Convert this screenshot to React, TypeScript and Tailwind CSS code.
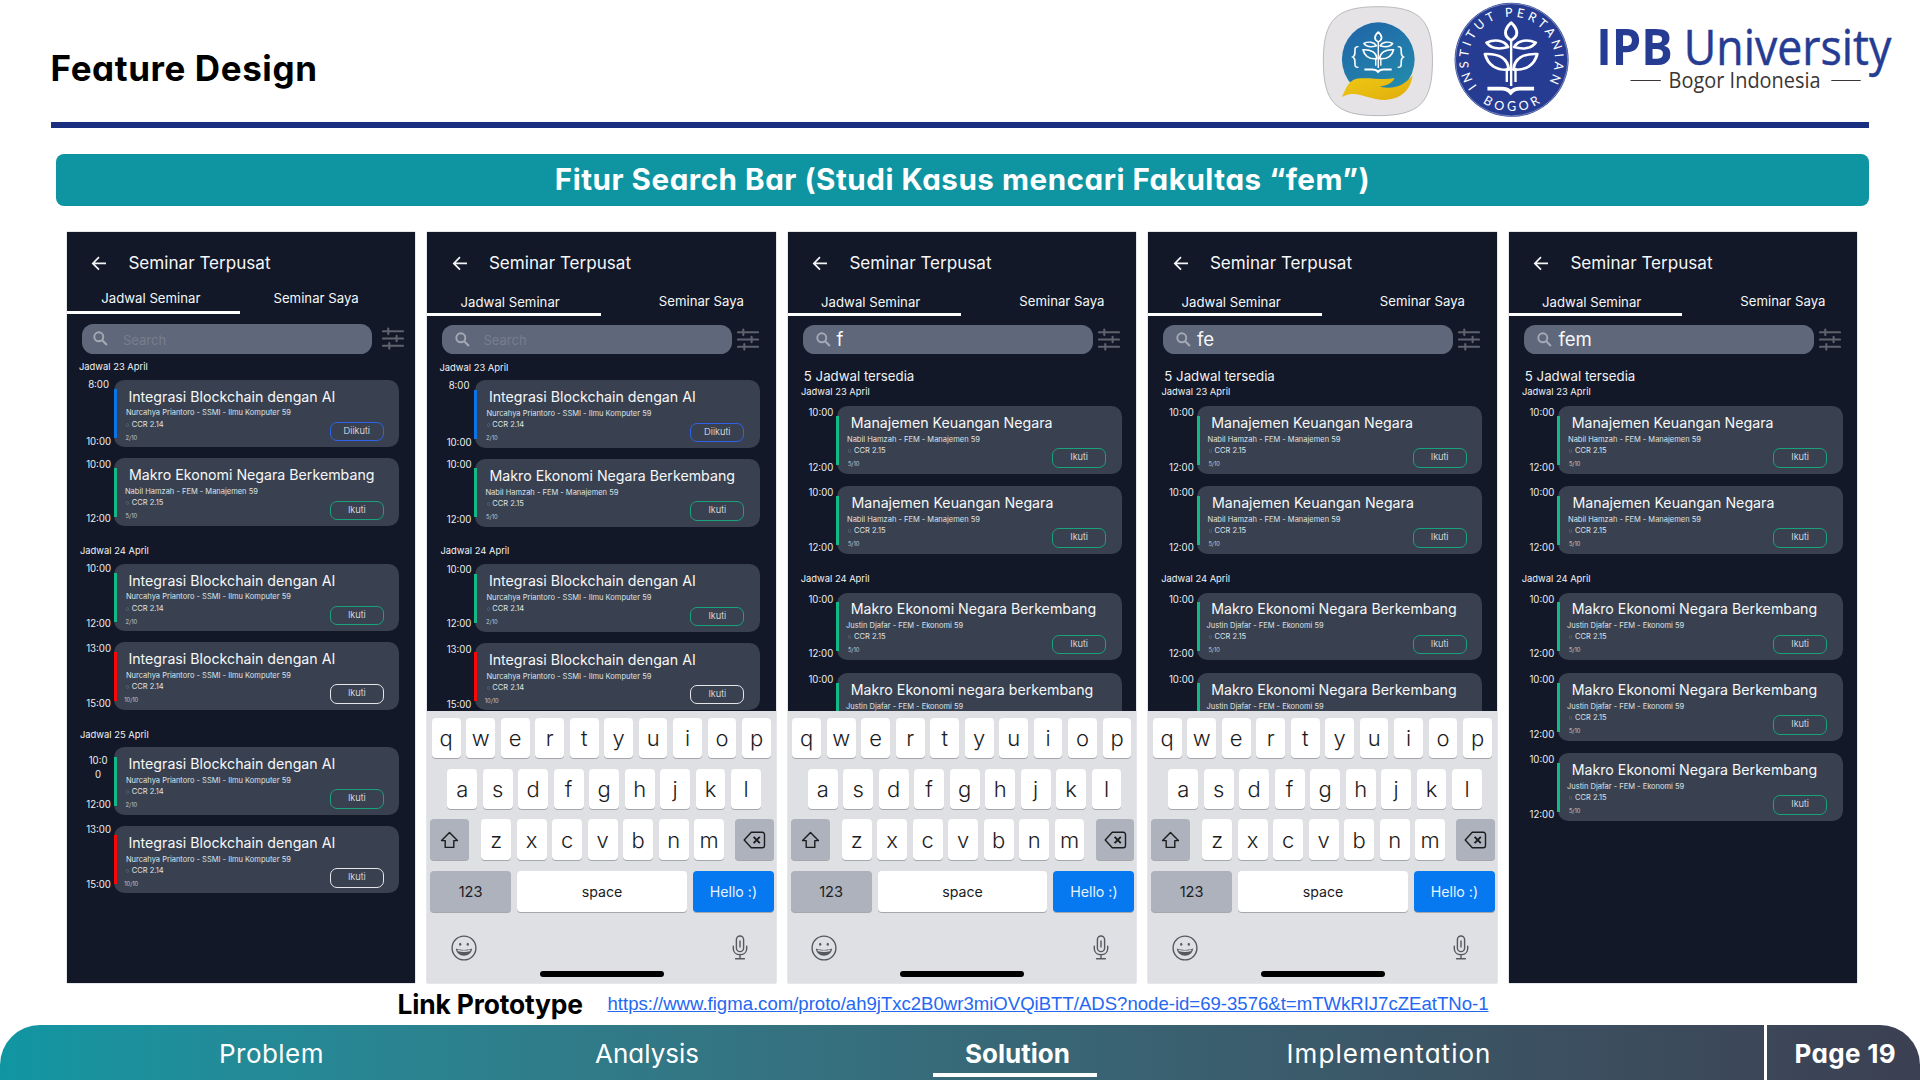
import type { ReactNode } from "react";

type Tone = "blue" | "green" | "red";

type Seminar = {
  start: string;
  end: string;
  title: string;
  speaker: string;
  room: string;
  quota: string;
  tone: Tone;
  button?: string;
  gap: string;
  timePad: string;
  titlePad?: string;
  speakerPad?: string;
};

type Group = { label: string; labelClass: string; items: Seminar[] };

const barTone: Record<Tone, string> = {
  blue: "bg-[#0b73e8]",
  green: "bg-[#12b886]",
  red: "bg-[#fb0505]",
};

const buttonTone: Record<Tone, string> = {
  blue: "border-[#2f62e8]",
  green: "border-[#18a37a]",
  red: "border-[#e3e5e8]",
};

const blockchain = {
  title: "Integrasi Blockchain dengan AI",
  speaker: "Nurcahya Priantoro - SSMI - Ilmu Komputer 59",
  room: "CCR 2.14",
};

const macroNabil = {
  title: "Makro Ekonomi Negara Berkembang",
  speaker: "Nabil Hamzah - FEM - Manajemen 59",
  room: "CCR 2.15",
  quota: "5/10",
  titlePad: "pl-[14.6px]",
  speakerPad: "pl-[10.6px]",
};

const finance = {
  start: "10:00",
  end: "12:00",
  title: "Manajemen Keuangan Negara",
  speaker: "Nabil Hamzah - FEM - Manajemen 59",
  room: "CCR 2.15",
  quota: "5/10",
  tone: "green" as Tone,
  timePad: "pt-0 h-[68.5px]",
  speakerPad: "pl-[10.3px]",
};

const macroJustin = {
  ...finance,
  title: "Makro Ekonomi Negara Berkembang",
  speaker: "Justin Djafar - FEM - Ekonomi 59",
  speakerPad: "pl-[9.3px]",
};

const allGroups: Group[] = [
  {
    label: "Jadwal 23 April",
    labelClass: "mt-[7.8px] pl-[12.2px]",
    items: [
      { ...blockchain, start: "8:00", end: "10:00", quota: "2/10", tone: "blue", button: "Diikuti", gap: "mt-[6.4px]", timePad: "-mt-[1.4px] h-[71px]" },
      { ...macroNabil, start: "10:00", end: "12:00", tone: "green", gap: "mt-[11.2px]", timePad: "-mt-[0.6px] h-[68.6px]" },
    ],
  },
  {
    label: "Jadwal 24 April",
    labelClass: "mt-[18.8px] pl-[13.2px]",
    items: [
      { ...blockchain, start: "10:00", end: "12:00", quota: "2/10", tone: "green", gap: "mt-[7px]", timePad: "-mt-[1.4px] h-[68.2px]" },
      { ...blockchain, start: "13:00", end: "15:00", quota: "10/10", tone: "red", gap: "mt-[11px]", timePad: "pt-0 h-[68.8px]" },
    ],
  },
  {
    label: "Jadwal 25 April",
    labelClass: "mt-[18.8px] pl-[13.2px]",
    items: [
      { ...blockchain, start: "10:0 0", end: "12:00", quota: "2/10", tone: "green", gap: "mt-[6.7px]", timePad: "pt-[7px] h-[64.6px]" },
      { ...blockchain, start: "13:00", end: "15:00", quota: "10/10", tone: "red", gap: "mt-[11.2px]", timePad: "-mt-[2.6px] h-[68.6px]" },
    ],
  },
];

const filteredGroups = (fourthTitle: string): Group[] => [
  {
    label: "Jadwal 23 April",
    labelClass: "mt-[2.3px] pl-[13.2px]",
    items: [
      { ...finance, gap: "mt-[8.3px]" },
      { ...finance, gap: "mt-[12.5px]", titlePad: "pl-[14.8px]" },
    ],
  },
  {
    label: "Jadwal 24 April",
    labelClass: "mt-[19.2px] pl-[12.9px]",
    items: [
      { ...macroJustin, gap: "mt-[7.7px]" },
      { ...macroJustin, title: fourthTitle, gap: "mt-[13.1px]" },
      { ...macroJustin, gap: "mt-[12.5px]" },
    ],
  },
];

function BackArrow() {
  return (
    <svg className="h-[16px] w-[16px] shrink-0" viewBox="0 0 16 16" fill="none" stroke="#f3f4f6" strokeWidth="1.7">
      <path d="M15 8.4H2M8 2.2 1.8 8.4 8 14.6" />
    </svg>
  );
}

function Magnifier() {
  return (
    <svg className="h-[15px] w-[15px] shrink-0" viewBox="0 0 15 15" fill="none" stroke="#a4a9b4" strokeWidth="1.9">
      <circle cx="5.8" cy="5.8" r="4.5" />
      <path d="M9 9l4.9 4.9" strokeWidth="2.1" />
    </svg>
  );
}

function Sliders() {
  return (
    <svg className="h-[23px] w-[22px] shrink-0" viewBox="0 0 22 23" fill="none" stroke="#5d626d" strokeWidth="2.1" strokeLinecap="round">
      <path d="M1 4.3h20M1 11.5h20M1 18.8h20M6.3 1.5v5.6M14.6 8.7v5.6M7.3 16v5.6" />
    </svg>
  );
}

function SeminarRow({ item, wide }: { item: Seminar; wide: boolean }) {
  return (
    <div className={`flex h-[67.5px] shrink-0 ${item.gap} ${wide ? "pl-[18.5px]" : "pl-[17.2px]"}`}>
      <div className={`flex w-[30.4px] shrink-0 flex-col justify-between pr-[1.2px] text-center text-[9.65px] leading-[14px] text-[#eceef1] ${item.timePad}`}>
        <span className="mx-auto block w-[22px] leading-[14px] whitespace-nowrap">
          {item.start.includes(" ") ? (
            <span className="-ml-[1px] block whitespace-normal">{item.start}</span>
          ) : (
            <span className="-mx-[2px] block">{item.start}</span>
          )}
        </span>
        <span>{item.end}</span>
      </div>
      <div className="relative flex h-[67.5px] w-[285px] flex-col rounded-[10.5px] bg-[#394150] pt-[6.9px]">
        <span className={`absolute top-[9.4px] -left-[0.4px] h-[49px] w-[3px] ${barTone[item.tone]}`} />
        <div className={`text-[14.2px] leading-[20px] whitespace-nowrap text-[#f6f7f8] ${item.titlePad ?? "pl-[14px]"}`}>{item.title}</div>
        <div className="flex justify-between pr-[15.6px]">
          <div className="flex flex-col pt-[1.8px] text-[7.5px] leading-[10px] text-[#dfe1e5]">
            <span className={`whitespace-nowrap ${item.speakerPad ?? "pl-[11.6px]"}`}>{item.speaker}</span>
            <span className="mt-[1.2px] flex items-center gap-[2.6px] pl-[11.8px]">
              <span className="h-[4px] w-[3px] rounded-full border-[0.6px] border-[#596070]" />
              {item.room}
            </span>
            <span className={`mt-[4px] text-[5.75px] leading-[8px] text-[#c6c9cf] ${item.quota.length > 4 ? "pl-[9.8px]" : "pl-[11.2px]"}`}>{item.quota}</span>
          </div>
          <div className={`mt-[15.3px] flex h-[19.4px] w-[54px] justify-center rounded-[7px] border bg-transparent text-[9.3px] leading-[15.4px] font-light text-[#eceef1] ${buttonTone[item.tone]}`}>
            {item.button ?? "Ikuti"}
          </div>
        </div>
      </div>
    </div>
  );
}

function Key({ children, className = "", tone = "bg-white" }: { children: ReactNode; className?: string; tone?: string }) {
  return (
    <span className={`flex h-[40.5px] items-center justify-center rounded-[4px] text-[#1c1c1e] shadow-[0_1px_0_#a5a7ac] ${tone} ${className}`}>{children}</span>
  );
}

function Keyboard() {
  return (
    <div className="flex h-[272.5px] shrink-0 flex-col bg-[#dfe0e4] pt-[7.4px] text-[22px] leading-[28px] font-[330]">
      <div className="flex gap-[5.8px] pl-[4.6px]">
        {"qwertyuiop".split("").map((c) => (
          <Key key={c} className="w-[28.7px]">{c}</Key>
        ))}
      </div>
      <div className="mt-[10.2px] flex gap-[5.7px] pl-[20px]">
        {"asdfghjkl".split("").map((c) => (
          <Key key={c} className="w-[29.8px]">{c}</Key>
        ))}
      </div>
      <div className="mt-[10.2px] flex pl-[2.8px]">
        <Key className="w-[39px]" tone="bg-[#adb2bd]">
          <svg className="h-[18px] w-[19px]" viewBox="0 0 19 18" fill="none" stroke="#1c1c1e" strokeWidth="1.4" strokeLinejoin="round">
            <path d="M9.5 1.6 1.6 9.6h3.6v6.8h8.6V9.6h3.6z" />
          </svg>
        </Key>
        <div className="ml-[12.2px] flex gap-[5.7px]">
          {"zxcvbnm".split("").map((c) => (
            <Key key={c} className="w-[29.8px]">{c}</Key>
          ))}
        </div>
        <Key className="ml-[11.2px] w-[38.8px]" tone="bg-[#adb2bd]">
          <svg className="h-[18px] w-[23px]" viewBox="0 0 23 18" fill="none" stroke="#1c1c1e" strokeWidth="1.4" strokeLinejoin="round">
            <path d="M8.3 1.3h11a2.2 2.2 0 0 1 2.2 2.2v11a2.2 2.2 0 0 1-2.2 2.2h-11L1.2 9z" />
            <path d="m10.6 5.8 6.2 6.4m0-6.4-6.2 6.4" strokeWidth="1.9" />
          </svg>
        </Key>
      </div>
      <div className="mt-[11.6px] flex gap-[6px] pl-[2.8px] text-[14.2px] font-normal">
        <Key className="w-[81px]" tone="bg-[#adb2bd]">
          <span className="text-[14.6px]">123</span>
        </Key>
        <Key className="w-[169.8px]">
          <span>space</span>
        </Key>
        <Key className="w-[81px]" tone="bg-[#0678f0]">
          <span className="text-[#e8f3ff]">Hello :)</span>
        </Key>
      </div>
      <div className="mt-[23.1px] flex items-center justify-between pr-[27.4px] pl-[23.5px]">
        <svg className="h-[26px] w-[26px]" viewBox="0 0 26 26" fill="none" stroke="#55585e" strokeWidth="1.4">
          <circle cx="13" cy="13" r="11.9" />
          <ellipse cx="9.2" cy="9.2" rx="1.1" ry="1.5" fill="#55585e" stroke="none" />
          <ellipse cx="16.8" cy="9.2" rx="1.1" ry="1.5" fill="#55585e" stroke="none" />
          <path d="M4.8 13.6c2.6 1 5.3 1.3 8.2 1.3s5.6-.3 8.2-1.3c-.5 4.3-3.9 7.2-8.2 7.2s-7.7-2.9-8.2-7.2z" fill="#55585e" stroke="none" />
          <path d="M6.7 15.4c4.2 1.2 8.4 1.2 12.6 0" stroke="#dfe0e4" strokeWidth="1.5" />
        </svg>
        <svg className="h-[25px] w-[16px]" viewBox="0 0 16 25" fill="none" stroke="#55585e" strokeWidth="1.4" strokeLinecap="round">
          <rect x="4.4" y="1" width="7.2" height="15.6" rx="3.6" />
          <path d="M1.3 11.2v2.2c0 3.8 2.8 6.2 6.7 6.2s6.7-2.4 6.7-6.2v-2.2M8 19.6v4M3.6 23.8h8.8M8 6v6" />
        </svg>
      </div>
      <div className="mt-[10px] ml-[112.6px] h-[6px] w-[124px] rounded-full bg-black" />
    </div>
  );
}

type PhoneProps = { query?: string; groups: Group[]; keyboard?: boolean; first?: boolean };

function Phone({ query, groups, keyboard = false, first = false }: PhoneProps) {
  const filtered = query !== undefined;
  return (
    <section className="flex h-[751px] w-[348.5px] shrink-0 flex-col overflow-hidden bg-[#121828] shadow-[0_0_1px_#6b7280]">
      <div className="flex min-h-0 flex-1 flex-col overflow-hidden">
        <div className="flex h-[56px] shrink-0 items-center pt-[6.4px] pl-[24.6px]">
          <BackArrow />
          <h2 className="ml-[21px] text-[17.1px] leading-[20px] text-[#f6f7f8]">Seminar Terpusat</h2>
        </div>
        <div className={`relative flex shrink-0 text-[13.2px] leading-[20px] text-[#f6f7f8] ${first ? "h-[25.6px] pt-[0.3px]" : "h-[28.4px] pt-[4.4px]"}`}>
          <span className={first ? "pl-[34.5px]" : "pl-[33.3px]"}>Jadwal Seminar</span>
          <span className={first ? "pl-[73px]" : "-mt-[1px] pl-[99px]"}>Seminar Saya</span>
          <span className="absolute bottom-0 left-0 h-[3px] w-[173.6px] bg-white" />
        </div>
        <div className={`flex shrink-0 items-center ${first ? "mt-[10.4px] pl-[15.6px]" : "mt-[8.2px] pl-[15.2px]"}`}>
          <div className={`flex h-[29.6px] w-[290px] items-center rounded-[11.5px] bg-[#5f677a] ${first ? "pl-[10.8px]" : "pl-[12.6px]"}`}>
            <Magnifier />
            {filtered ? (
              <span className={`text-[18.6px] leading-[24px] text-[#f6f7f8] ${query.length > 2 ? "ml-[6.8px]" : "ml-[5.8px]"}`}>{query}</span>
            ) : (
              <span className={`text-[13px] leading-[20px] text-[#777e8d] ${first ? "mt-[2px] ml-[14.8px]" : "mt-[1px] ml-[13.4px]"}`}>Search</span>
            )}
          </div>
          <span className={first ? "ml-[9.2px]" : "ml-[4.8px]"}>
            <Sliders />
          </span>
        </div>
        {filtered && <div className="mt-[13.4px] shrink-0 pl-[16px] text-[13.25px] leading-[16px] text-[#f1f2f4]">5 Jadwal tersedia</div>}
        {groups.map((g) => (
          <div key={g.label} className="flex shrink-0 flex-col">
            <h3 className={`text-[9.4px] leading-[12px] text-[#f1f2f4] ${g.labelClass}`}>{g.label}</h3>
            {g.items.map((item, i) => (
              <SeminarRow key={i} item={item} wide={filtered} />
            ))}
          </div>
        ))}
      </div>
      {keyboard && <Keyboard />}
    </section>
  );
}

function PlantMark() {
  return (
    <g fill="none" stroke="#fff" strokeWidth="7.6" strokeLinejoin="round">
      <path d="M534 68c-20 22-18 42 0 53c18-11 20-31 0-53z" />
      <path d="M472 128c20-11 44-8 54 13c-22 8-44 5-54-13z" />
      <path d="M596 128c-20-11-44-8-54 13c22 8 44 5 54-13z" />
      <path d="M468 162c34-2 58 12 60 47c-30 3-53-13-60-47z" />
      <path d="M600 162c-34-2-58 12-60 47c30 3 53-13 60-47z" />
      <path d="M534 118v140M523 204v42M545 204v42" strokeWidth="6" />
      <path d="M474 266h36c12 0 18 4 23 11c5-7 11-11 23-11h36" strokeWidth="11" strokeLinejoin="miter" />
    </g>
  );
}

function Logos() {
  return (
    <div className="flex h-full">
      <svg className="h-[122px] w-[112px]" viewBox="1322 0 112 122">
        <defs>
          <linearGradient id="disc" x1="0" y1="0" x2="0.6" y2="1">
            <stop offset="0" stopColor="#1f63a8" />
            <stop offset="1" stopColor="#2389ab" />
          </linearGradient>
          <linearGradient id="hand" x1="0" y1="0" x2="1" y2="1">
            <stop offset="0" stopColor="#f0c814" />
            <stop offset="1" stopColor="#dfae0d" />
          </linearGradient>
        </defs>
        <g transform="translate(1300 0) scale(0.3954 0.3333)">
          <path d="M59 183C59 60 90 20 197 20S335 60 335 183S304 347 197 347S59 306 59 183z" fill="#e5e3e6" stroke="#a3a3a8" strokeWidth="2" />
          <ellipse cx="198" cy="178" rx="92" ry="111" fill="url(#disc)" />
          <g transform="translate(-113.9 57) scale(0.584 0.57)">
            <PlantMark />
          </g>
          <path d="M148 140c-9 0-9 3-9 12c0 11 0 16-6 19c6 3 6 8 6 18c0 10 0 13 9 13M247 140c9 0 9 3 9 12c0 11 0 16 6 19c-6 3-6 8-6 18c0 10 0 13-9 13" fill="none" stroke="#fff" strokeWidth="4" />
          <path d="M106 291C118 262 124 236 152 235C186 233 212 241 239 234C235 249 220 256 202 260C240 271 266 253 285 226C280 264 262 297 215 300C180 301 152 277 126 283C117 285 111 288 106 291z" fill="url(#hand)" />
        </g>
      </svg>
      <svg className="ml-[20px] h-[122px] w-[116px]" viewBox="1454 0 116 122">
        <defs>
          <path id="ringTop" d="M1476.9 86.2A43.4 43.4 0 1 1 1548.6 82.5" />
          <path id="ringBottom" d="M1482.6 102.6A51.5 51.5 0 0 0 1541 102.2" />
        </defs>
        <circle cx="1511.6" cy="59.8" r="57" fill="#263c93" />
        <circle cx="1511.6" cy="59.8" r="56.2" fill="none" stroke="#8f9bca" strokeWidth="0.8" />
        <g transform="translate(1300 0) scale(0.3954 0.3333)">
          <PlantMark />
        </g>
        <g fill="#fff" className="font-['Lato',sans-serif] text-[12.5px]">
          <text>
            <textPath href="#ringTop" textLength="187">INSTITUT PERTANIAN</textPath>
          </text>
          <text>
            <textPath href="#ringBottom" textLength="61">BOGOR</textPath>
          </text>
        </g>
      </svg>
      <svg className="ml-[24px] h-[122px] w-[306px]" viewBox="1594 0 306 122">
        <g className="font-['Open_Sans',sans-serif]">
          <text x="1596.2" y="64.6" fontSize="49.5" fontWeight="700" fill="#263c93" textLength="76.5" lengthAdjust="spacingAndGlyphs">IPB</text>
          <text x="1683.8" y="64.6" fontSize="49.5" fill="#263c93" stroke="#263c93" strokeWidth="0.5" textLength="207.5" lengthAdjust="spacingAndGlyphs">University</text>
          <text x="1668.6" y="88.4" fontSize="22.6" fill="#3b3634" textLength="152" lengthAdjust="spacingAndGlyphs">Bogor Indonesia</text>
        </g>
        <path d="M1630.5 80.5h30.3M1831.3 80.5h29.4" stroke="#3b3634" strokeWidth="1.2" />
      </svg>
    </div>
  );
}

export default function App() {
  return (
    <main className="flex h-[1080px] w-[1920px] flex-col overflow-hidden bg-white font-['Inter',sans-serif]">
      <header className="flex h-[122px] shrink-0 items-center justify-between pr-[20px] pl-[50.5px]">
        <h1 className="mt-[13px] text-[35px] leading-[40px] font-[750] tracking-[0.017em] text-black [font-feature-settings:'cv11']">Feature Design</h1>
        <Logos />
      </header>
      <div className="ml-[51px] h-[5.5px] w-[1818px] shrink-0 bg-[#1a2f80]" />
      <div className="mt-[26px] ml-[56px] flex h-[52px] w-[1813px] shrink-0 items-center justify-center rounded-[8px] bg-[#0e95a1] text-[29.6px] font-[750] tracking-[0.0175em] text-white [font-feature-settings:'cv11']">
        Fitur Search Bar (Studi Kasus mencari Fakultas “fem”)
      </div>
      <div className="mt-[26.5px] flex shrink-0 gap-[12px] pl-[66.8px]">
        <Phone first groups={allGroups} />
        <Phone groups={allGroups} keyboard />
        <Phone query="f" groups={filteredGroups("Makro Ekonomi negara berkembang")} keyboard />
        <Phone query="fe" groups={filteredGroups("Makro Ekonomi Negara Berkembang")} keyboard />
        <Phone query="fem" groups={filteredGroups("Makro Ekonomi Negara Berkembang")} />
      </div>
      <div className="flex h-[42px] shrink-0 items-center pl-[397.5px]">
        <span className="w-[210px] text-[26.4px] leading-[30px] font-[750] tracking-[-0.006em] text-black [font-feature-settings:'cv11']">Link Prototype</span>
        <a className="font-['Liberation_Sans',sans-serif] text-[18.57px] leading-[24px] text-[#2468f2] underline">
          https://www.figma.com/proto/ah9jTxc2B0wr3miOVQiBTT/ADS?node-id=69-3576&amp;t=mTWkRIJ7cZEatTNo-1
        </a>
      </div>
      <footer className="flex h-[55px] shrink-0 rounded-t-[40px] bg-linear-to-r from-[#0f96a2] to-[#3b4052] text-[26px] leading-[30px] text-white [font-feature-settings:'cv11']">
        <nav className="flex w-[1763.5px] pt-[14.4px]">
          <span className="ml-[219px] w-[376px] tracking-[0.018em]">Problem</span>
          <span className="w-[338px]">Analysis</span>
          <span className="relative w-[164px] pl-[5px] text-center font-[750]">
            <span className="block">Solution</span>
            <span className="absolute top-[33.4px] left-0 h-[4px] w-[164px] bg-white" />
          </span>
          <span className="ml-[189.6px] tracking-[0.04em]">Implementation</span>
        </nav>
        <span className="w-[3.5px] bg-white" />
        <span className="pt-[14.4px] pl-[27.5px] font-[750] tracking-[0.012em]">Page 19</span>
      </footer>
    </main>
  );
}
